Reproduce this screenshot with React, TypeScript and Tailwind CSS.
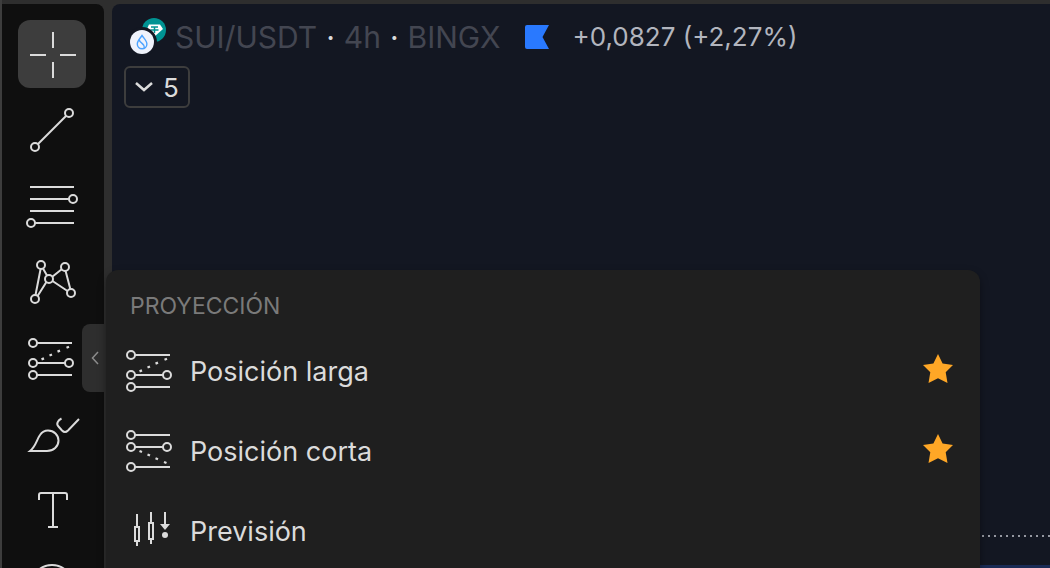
import { useState } from 'react';
import type { ReactNode } from 'react';

type IconProps = { children: ReactNode };

function Icon({ children }: IconProps) {
  return (
    <svg
      viewBox="0 0 56 56"
      className="size-14 shrink-0"
      fill="none"
      stroke="currentColor"
      strokeWidth="2"
      aria-hidden="true"
    >
      {children}
    </svg>
  );
}

const LongIcon = () => (
  <Icon>
    <path d="M13 13H48M13 33H41M13 45H48" />
    <circle cx="9" cy="13" r="4" />
    <circle cx="9" cy="33" r="4" />
    <circle cx="45" cy="33" r="4" />
    <circle cx="9" cy="45" r="4" />
    <path d="M17.500 29.400l2.500-1M25.500 25.500l2.500-1M33.500 21.600l2.500-1M42.500 17.700l2.500-1" strokeWidth="2.300" />
  </Icon>
);

const ShortIcon = () => (
  <Icon>
    <path d="M13 13H48M13 25H41M13 45H48" />
    <circle cx="9" cy="13" r="4" />
    <circle cx="9" cy="25" r="4" />
    <circle cx="45" cy="25" r="4" />
    <circle cx="9" cy="45" r="4" />
    <path d="M17.500 29l2.500 1M25.500 32.500l2.500 1M33.500 36.300l2.500 1M42 40l2.500 1" strokeWidth="2.300" />
  </Icon>
);

const ForecastIcon = () => (
  <Icon>
    <path d="M15 12V25M15 39V44M29 10V21M29 37V42M43 10V24" />
    <path d="M13 25h4v14h-4zM27 21h4v16h-4z" />
    <path d="M38 22h10l-5 6z" fill="currentColor" stroke="none" />
    <circle cx="43" cy="33" r="3" fill="currentColor" stroke="none" />
  </Icon>
);

const tools = [
  {
    id: 'cross',
    label: 'Cruz',
    icon: (
      <Icon>
        <path d="M29 6V22M29 36V52M6 29H22M36 29H52" />
      </Icon>
    ),
  },
  {
    id: 'trend',
    label: 'Línea de tendencia',
    icon: (
      <Icon>
        <path d="M14 42L42 14" />
        <circle cx="11" cy="45" r="4" />
        <circle cx="45" cy="11" r="4" />
      </Icon>
    ),
  },
  {
    id: 'fib',
    label: 'Retroceso de Fibonacci',
    icon: (
      <Icon>
        <path d="M6 9H50M6 21H45M6 33H50M11 45H50" />
        <circle cx="49" cy="21" r="4" />
        <circle cx="7" cy="45" r="4" />
      </Icon>
    ),
  },
  {
    id: 'pattern',
    label: 'Patrón XABCD',
    icon: (
      <Icon>
        <path d="M16.600 15L11.500 41M13.600 42L22.400 28M19 14.500L23 21.500M28.300 22.700L37.700 15.300M41.600 17L46.300 35M28.500 27L43.500 37" />
        <circle cx="17" cy="11" r="4" />
        <circle cx="41" cy="13" r="4" />
        <circle cx="25" cy="25" r="4" />
        <circle cx="47" cy="39" r="4" />
        <circle cx="11" cy="45" r="4" />
      </Icon>
    ),
  },
  { id: 'long', label: 'Posición larga', icon: <LongIcon /> },
  {
    id: 'brush',
    label: 'Pincel',
    icon: (
      <Icon>
        <path d="M6 45C12 40 12.500 34 16 29C18 26 20.500 24.500 24 24.500C30 24.500 34.500 29 34.500 34.500C34.500 40.500 29.500 45 23 45Z" />
        <path d="M37.500 12.500C33.500 14.500 32 18 34.500 20.500L38 24.500C40 26.500 42 26.500 44 24.500L55 13" />
      </Icon>
    ),
  },
  {
    id: 'text',
    label: 'Texto',
    icon: (
      <Icon>
        <path d="M15 18V13Q15 11 17 11H41Q43 11 43 13V18M29 11V45M24 45H34" />
      </Icon>
    ),
  },
  {
    id: 'emoji',
    label: 'Emojis',
    icon: (
      <Icon>
        <circle cx="28" cy="28" r="21" />
        <path d="M19 34Q28 43 37 34M21 22V24M35 22V24" />
      </Icon>
    ),
  },
];

const projections = [
  { id: 'long', label: 'Posición larga', icon: <LongIcon />, favorite: true },
  { id: 'short', label: 'Posición corta', icon: <ShortIcon />, favorite: true },
  { id: 'forecast', label: 'Previsión', icon: <ForecastIcon />, favorite: false },
];

function Toolbar() {
  const [active, setActive] = useState('cross');

  return (
    <nav className="relative flex w-[102px] shrink-0 flex-col gap-2 rounded-tr-lg bg-[#0f0f0f] p-4 text-[#dbdbdb]">
      {tools.map((tool) => (
        <button
          key={tool.id}
          type="button"
          aria-label={tool.label}
          onClick={() => setActive(tool.id)}
          className={`flex size-[68px] shrink-0 items-center justify-center rounded-xl ${
            active === tool.id ? 'bg-[#3d3d3d]' : ''
          }`}
        >
          {tool.icon}
        </button>
      ))}
      <button
        type="button"
        aria-label="Cerrar menú"
        className="absolute top-80 right-0 flex h-[68px] w-[22px] items-center justify-end rounded-l-lg bg-[#2e2e2e] pr-[5px] text-[#8c8c8c]"
      >
        <svg viewBox="0 0 8 14" className="h-3.5 w-2" fill="none" stroke="currentColor" strokeWidth="1.500" aria-hidden="true">
          <path d="M7 1L1.500 7L7 13" />
        </svg>
      </button>
    </nav>
  );
}

function PairLogo() {
  return (
    <svg viewBox="0 0 38 38" className="size-[38px] shrink-0" aria-hidden="true">
      <circle cx="25" cy="12" r="12" fill="#009393" />
      <path d="M20 6.500h11l3 4.500L25 19l-7-8z" fill="#fff" />
      <path d="M22 9h7M25.500 9v6M21.500 12h8" stroke="#009393" strokeWidth="1.500" />
      <circle cx="13" cy="24" r="15" fill="#131722" />
      <circle cx="13" cy="24" r="12" fill="#eff2fb" />
      <g fill="none" stroke="#4ca3ff" strokeWidth="1.400">
        <path d="M13 17.500C11 20.500 8.300 23 8.300 26a4.800 4.800 0 0 0 9.600 0C17.900 23 15 20.500 13 17.500z" />
        <path d="M10.300 21.800C10.500 25.500 15.500 24.500 15.200 30" />
      </g>
    </svg>
  );
}

function Legend() {
  return (
    <header className="flex flex-col items-start px-3 pt-3">
      <div className="flex h-[42px] items-center pl-[5px]">
        <PairLogo />
        <h1 className="ml-2 flex gap-[9px] text-[30px] leading-10 whitespace-nowrap text-[#434651]">
          <span>SUI/USDT</span>
          <span className="text-[#dbdbdb]">·</span>
          <span>4h</span>
          <span className="text-[#dbdbdb]">·</span>
          <span>BINGX</span>
        </h1>
        <svg viewBox="0 0 24 24" className="ml-6 size-6 shrink-0" aria-hidden="true">
          <path d="M2 0H24L17.500 12L24 24H2Q0 24 0 22V2Q0 0 2 0z" fill="#2979ff" />
        </svg>
        <p className="ml-6 text-[26px] leading-10 whitespace-nowrap text-[#b2b5be]">+0,0827 (+2,27%)</p>
      </div>
      <button
        type="button"
        className="mt-2 flex h-[42px] w-[66px] items-center justify-center gap-2.5 rounded-md border-2 border-[#3d3d3d] text-[26px] text-[#dbdbdb]"
      >
        <svg viewBox="0 0 18 10" className="h-2.5 w-[18px]" fill="none" stroke="currentColor" strokeWidth="2.500" aria-hidden="true">
          <path d="M1 1L9 8L17 1" />
        </svg>
        5
      </button>
    </header>
  );
}

function ProjectionMenu() {
  return (
    <section className="absolute top-[270px] right-[70px] left-[104px] rounded-xl bg-[#1f1f1f] pt-5 pb-4 text-[#dbdbdb] shadow-[0_4px_8px_rgba(0,0,0,0.4)]">
      <h2 className="px-6 pb-2 text-[23px] leading-8 text-[#7a7a7a]">PROYECCIÓN</h2>
      <ul>
        {projections.map((item) => (
          <li key={item.id} className="flex h-20 items-center pr-[26px] pl-4">
            <button type="button" className="flex grow items-center gap-3 text-left text-[27px] leading-10">
              {item.icon}
              <span className="pt-1">{item.label}</span>
            </button>
            {item.favorite && (
              <button type="button" aria-label={`Quitar ${item.label} de favoritos`}>
                <svg viewBox="0 0 32 32" className="size-8" fill="#ffa726" aria-hidden="true">
                  <path d="M16 0L20.600 9.500L31 11L23.700 18.300L25.500 29L16 24.200L6.500 29L8.300 18.300L1 11L11.400 9.500z" />
                </svg>
              </button>
            )}
          </li>
        ))}
      </ul>
    </section>
  );
}

export default function App() {
  return (
    <div className="relative flex h-screen gap-2 overflow-hidden border-l-2 border-[#3d3d3d] bg-[#2e2e2e] pt-1 font-['Inter',sans-serif]">
      <Toolbar />
      <main className="flex min-w-0 grow flex-col rounded-tl-lg bg-[#131722]">
        <Legend />
        <div className="mt-auto mb-7 h-0.5 bg-[repeating-linear-gradient(90deg,#9598a1_0_2px,transparent_2px_6px)]" />
        <div className="h-[3px] bg-[#1a2b55]" />
      </main>
      <ProjectionMenu />
    </div>
  );
}
